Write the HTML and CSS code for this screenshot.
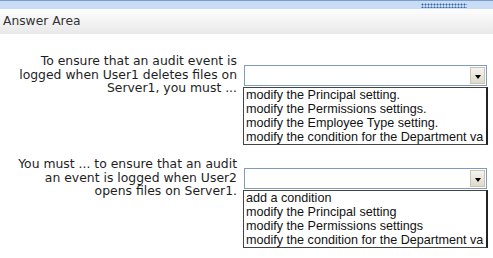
FILE: index.html
```html
<!DOCTYPE html>
<html lang="en">

<head>
    <meta charset="UTF-8">
    <title>Answer Area</title>
    <link rel="stylesheet" href="styles.css">
</head>

<body>
    <!-- Top bar -->
    <div class="top-bar">
        <div class="grip"></div>
    </div>

    <div class="area-header">Answer Area</div>

    <div class="questions">
        <div class="question">
            <div class="question-text">
                To ensure that an audit event is<br>
                logged when User1 deletes files on<br>
                Server1, you must ...
            </div>
            <div class="answer">
                <div class="drop">
                    <div class="drop-value"></div>
                    <div class="drop-btn"><span class="arrow"></span></div>
                </div>
                <ul class="choices">
                    <li>modify the Principal setting.</li>
                    <li>modify the Permissions settings.</li>
                    <li>modify the Employee Type setting.</li>
                    <li>modify the condition for the Department va</li>
                </ul>
            </div>
        </div>

        <div class="question">
            <div class="question-text">
                You must ... to ensure that an audit<br>
                an event is logged when User2<br>
                opens files on Server1.
            </div>
            <div class="answer">
                <div class="drop">
                    <div class="drop-value"></div>
                    <div class="drop-btn"><span class="arrow"></span></div>
                </div>
                <ul class="choices">
                    <li>add a condition</li>
                    <li>modify the Principal setting</li>
                    <li>modify the Permissions settings</li>
                    <li>modify the condition for the Department va</li>
                </ul>
            </div>
        </div>
    </div>
</body>

</html>
```

FILE: styles.css
```css
body {
    margin: 0;
    background-color: #fff;
    font-family: "DejaVu Sans", Verdana, sans-serif;
    color: #222;
}

.top-bar {
    height: 8px;
    background-color: #c8ddf5;
    border-top: 1px solid #7d9ec6;
    position: relative;
}

/* dotted grip on the right */
.grip {
    position: absolute;
    left: 421px;
    top: 2px;
    width: 46px;
    height: 5px;
    background-image: radial-gradient(circle, #3a64a8 0.9px, transparent 1.1px);
    background-size: 3px 3px;
}

.area-header {
    height: 25px;
    line-height: 24px;
    padding-left: 3px;
    font-size: 12.3px;
    color: #333;
    background: linear-gradient(#fdfdfd, #e9e9e9);
}

.questions {
    padding-top: 20px;
}

.question {
    display: grid;
    grid-template-columns: 237px 244px;
    column-gap: 6px;
    margin-bottom: 12px;
}

.question-text {
    text-align: right;
    font-size: 12.4px;
    line-height: 13.5px;
    color: #1e1e1e;
}

.answer {
    padding-top: 11px;
}

.drop {
    display: flex;
    width: 239px;
    height: 17px;
    margin-left: 1px;
    border: 1px solid #7f9db9;
    background-color: #fff;
    padding: 1px;
}

.drop-value {
    flex: 1;
}

.drop-btn {
    width: 15px;
    background: linear-gradient(#f4f3ee, #dedbcc);
    border: 1px solid #c8c5b4;
    box-sizing: border-box;
    display: flex;
    align-items: center;
    justify-content: center;
}

.arrow {
    width: 0;
    height: 0;
    border-left: 3.5px solid transparent;
    border-right: 3.5px solid transparent;
    border-top: 4px solid #000;
    margin-top: 2px;
}

.choices {
    list-style: none;
    margin: 1px 0 0 0;
    padding: 0 0 0 2px;
    width: 240px;
    border: 1px solid #444;
    border-right: 2px solid #222;
    font-family: "Liberation Sans", Tahoma, sans-serif;
    font-size: 12.6px;
    line-height: 14px;
    color: #111;
    overflow: hidden;
}

.choices li {
    white-space: nowrap;
}
```
